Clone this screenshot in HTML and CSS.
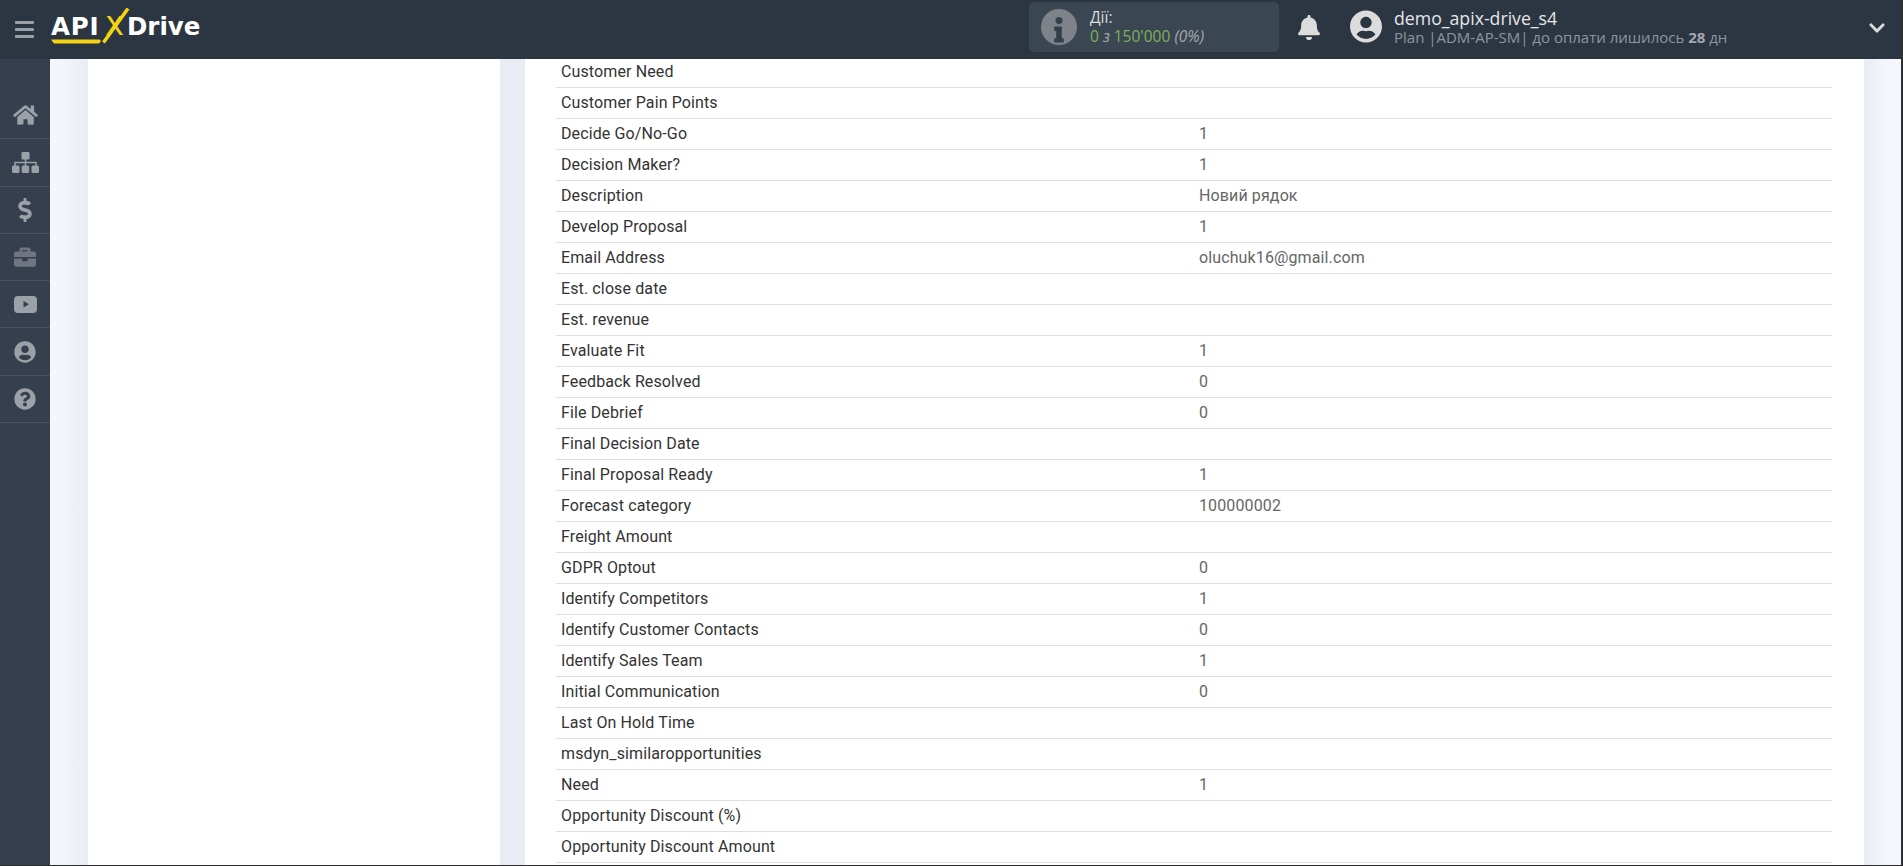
FILE: index.html
```html
<!DOCTYPE html>
<html lang="uk">
<head>
<meta charset="utf-8">
<title>ApiX-Drive</title>
<link rel="stylesheet" href="styles.css">
</head>
<body>
<div class="app">
  <header class="topbar">
    <div class="menu-btn"><i></i><i></i><i></i></div>
    <div class="logo">
      <span class="logo-api">API</span><span class="logo-x">X</span><span class="logo-drive">Drive</span>
      <svg class="logo-art" viewBox="0 0 160 44" width="160" height="44"><path d="M0 31.500h48.500l1.500 1.500-2 2.500H3z" fill="#f5d214"/><path d="M52.500 34.500 77 .5" stroke="#f5d214" stroke-width="3.500" fill="none"/></svg>
    </div>
    <div class="actions">
      <svg class="info-ico" viewBox="0 0 36 36" width="36" height="36"><circle cx="18" cy="18" r="18" fill="#7d8388"/><g transform="translate(13.200 8) scale(.05)"><path fill="#333f49" d="M20 424.229h20V279.771H20c-11.046 0-20-8.954-20-20V212c0-11.046 8.954-20 20-20h112c11.046 0 20 8.954 20 20v212.229h20c11.046 0 20 8.954 20 20V492c0 11.046-8.954 20-20 20H20c-11.046 0-20-8.954-20-20v-47.771c0-11.046 8.954-20 20-20zM96 0C56.235 0 24 32.235 24 72s32.235 72 72 72 72-32.235 72-72S135.764 0 96 0z"/></g></svg>
      <div class="actions-text">
        <div class="actions-title">Дії:</div>
        <div class="actions-count">0 <em class="of">з</em> 150'000 <em class="pct">(0%)</em></div>
      </div>
    </div>
    <svg class="bell" viewBox="0 0 448 512" width="22" height="25"><path fill="#dcdcdc" d="M224 512c35.32 0 63.97-28.65 63.97-64H160.030c0 35.35 28.650 64 63.970 64zm215.390-149.710c-19.320-20.760-55.470-51.990-55.470-154.290 0-77.700-54.480-139.900-127.940-155.160V32c0-17.670-14.320-32-31.980-32s-31.980 14.330-31.980 32v20.840C118.560 68.100 64.080 130.300 64.080 208c0 102.300-36.150 133.530-55.470 154.290-6 6.450-8.660 14.160-8.610 21.710.11 16.400 12.980 32 32.100 32h383.800c19.120 0 32-15.600 32.100-32 .05-7.550-2.610-15.270-8.610-21.710z"/></svg>
    <svg class="avatar" viewBox="0 0 496 512" width="32" height="33"><path fill="#dcdcdc" d="M248 8C111 8 0 119 0 256s111 248 248 248 248-111 248-248S385 8 248 8zm0 96c48.600 0 88 39.400 88 88s-39.400 88-88 88-88-39.400-88-88 39.400-88 88-88zm0 344c-58.700 0-111.300-26.600-146.500-68.200 18.800-35.400 55.600-59.800 98.500-59.800 2.400 0 4.800.4 7.100 1.100 13 4.200 26.600 6.900 40.900 6.900 14.300 0 28-2.700 40.900-6.900 2.300-.7 4.700-1.100 7.100-1.100 42.900 0 79.700 24.400 98.500 59.800C359.300 421.400 306.700 448 248 448z"/></svg>
    <div class="user">
      <div class="user-name">demo_apix-drive_s4</div>
      <div class="user-plan">Plan |ADM-AP-SM| до оплати лишилось <b>28</b> дн</div>
    </div>
    <svg class="chev" viewBox="0 0 448 512" width="16" height="18"><path fill="#dcdcdc" d="M207.029 381.476L12.686 187.132c-9.373-9.373-9.373-24.569 0-33.941l22.667-22.667c9.357-9.357 24.522-9.375 33.901-.04L224 284.505l154.745-154.021c9.379-9.335 24.544-9.317 33.901.04l22.667 22.667c9.373 9.373 9.373 24.569 0 33.941L240.971 381.476c-9.373 9.372-24.569 9.372-33.942 0z"/></svg>
  </header>
  <div class="body">
    <nav class="sidebar">
      <a class="nav-item"><svg viewBox="0 0 576 512" width="25" height="22"><path d="M280.370 148.260L96 300.110V464a16 16 0 0 0 16 16l112.060-.29a16 16 0 0 0 15.920-16V368a16 16 0 0 1 16-16h64a16 16 0 0 1 16 16v95.640a16 16 0 0 0 16 16.050L464 480a16 16 0 0 0 16-16V300L295.670 148.260a12.190 12.190 0 0 0-15.300 0zM571.600 251.470L488 182.560V44.050a12 12 0 0 0-12-12h-56a12 12 0 0 0-12 12v72.610L318.470 43a48 48 0 0 0-61 0L4.340 251.470a12 12 0 0 0-1.600 16.900l25.500 31A12 12 0 0 0 45.150 301l235.220-193.740a12.190 12.190 0 0 1 15.300 0L530.900 301a12 12 0 0 0 16.900-1.600l25.500-31a12 12 0 0 0-1.700-16.930z"/></svg></a>
      <a class="nav-item"><svg viewBox="0 0 27 21" width="27" height="21"><rect x="9.500" width="8" height="7.500" rx="1"/><rect y="13.500" width="7.500" height="7.500" rx="1.500"/><rect x="9.700" y="13.500" width="7.500" height="7.500" rx="1.500"/><rect x="19.500" y="13.500" width="7.500" height="7.500" rx="1.500"/><path d="M3 14v-3.500h21V14M13.500 7v7" fill="none" stroke="#9ca1a8" stroke-width="1.500"/></svg></a>
      <a class="nav-item"><svg viewBox="0 0 288 512" width="14" height="24"><path d="M209.200 233.400l-108-31.600C88.700 198.200 80 186.500 80 173.500c0-16.300 13.200-29.500 29.500-29.500h66.300c12.200 0 24.200 3.700 34.200 10.500 6.100 4.100 14.300 3.100 19.500-2l34.800-34c7.100-6.900 6.100-18.400-1.800-24.500C238 74.800 207.400 64.100 176 64V16c0-8.800-7.200-16-16-16h-32c-8.800 0-16 7.200-16 16v48h-2.500C45.800 64-5.400 118.700.5 183.600c4.200 46.100 39.400 83.600 83.800 96.600l102.500 30c12.500 3.700 21.200 15.300 21.200 28.300 0 16.300-13.200 29.500-29.500 29.500h-66.300C100 368 88 364.300 78 357.500c-6.100-4.100-14.300-3.100-19.500 2l-34.800 34c-7.100 6.900-6.100 18.400 1.800 24.500 24.500 19.200 55.100 29.900 86.500 30v48c0 8.800 7.200 16 16 16h32c8.800 0 16-7.200 16-16v-48.200c46.600-.9 90.300-28.600 105.700-72.700 21.500-61.600-14.600-124.800-72.500-141.700z"/></svg></a>
      <a class="nav-item nav-dim"><svg viewBox="0 0 512 512" width="22" height="22"><path d="M320 336c0 8.840-7.160 16-16 16h-96c-8.840 0-16-7.160-16-16v-48H0v144c0 25.600 22.400 48 48 48h416c25.600 0 48-22.400 48-48V288H320v48zm144-208h-80V80c0-25.600-22.400-48-48-48H176c-25.600 0-48 22.400-48 48v48H48c-25.600 0-48 22.400-48 48v80h512v-80c0-25.600-22.400-48-48-48zm-144 0H192V96h128v32z"/></svg></a>
      <a class="nav-item"><svg viewBox="0 0 23 17" width="23" height="17"><path fill-rule="evenodd" d="M4 0h15a4 4 0 0 1 4 4v9a4 4 0 0 1-4 4H4a4 4 0 0 1-4-4V4a4 4 0 0 1 4-4zM9.500 5v6.500l5.500-3.250z"/></svg></a>
      <a class="nav-item"><svg viewBox="0 0 496 512" width="22" height="22"><path d="M248 8C111 8 0 119 0 256s111 248 248 248 248-111 248-248S385 8 248 8zm0 96c48.600 0 88 39.400 88 88s-39.400 88-88 88-88-39.400-88-88 39.400-88 88-88zm0 344c-58.700 0-111.300-26.600-146.500-68.200 18.800-35.400 55.600-59.800 98.500-59.800 2.400 0 4.800.4 7.100 1.100 13 4.200 26.600 6.900 40.900 6.900 14.300 0 28-2.700 40.900-6.900 2.300-.7 4.700-1.100 7.100-1.100 42.900 0 79.700 24.400 98.500 59.800C359.300 421.400 306.700 448 248 448z"/></svg></a>
      <a class="nav-item"><svg viewBox="0 0 512 512" width="22" height="22"><path d="M504 256c0 136.997-111.043 248-248 248S8 392.997 8 256C8 119.083 119.043 8 256 8s248 111.083 248 248zM262.655 90c-54.497 0-89.255 22.957-116.549 63.758-3.536 5.286-2.353 12.415 2.715 16.258l34.699 26.310c5.205 3.947 12.621 3.008 16.665-2.122 17.864-22.658 30.113-35.797 57.303-35.797 20.429 0 45.698 13.148 45.698 32.958 0 14.976-12.363 22.667-32.534 33.976C247.128 238.528 216 254.941 216 296v4c0 6.627 5.373 12 12 12h56c6.627 0 12-5.373 12-12v-1.333c0-28.462 83.186-29.647 83.186-106.667 0-58.002-60.165-102-116.531-102zM256 338c-25.365 0-46 20.635-46 46 0 25.364 20.635 46 46 46s46-20.636 46-46c0-25.365-20.635-46-46-46z"/></svg></a>
    </nav>
    <main class="main">
      <aside class="card card-left"></aside>
      <section class="card card-right">
        <div class="rows">
          <div class="row"><span class="k">Customer Need</span><span class="v"></span></div>
          <div class="row"><span class="k">Customer Pain Points</span><span class="v"></span></div>
          <div class="row"><span class="k">Decide Go/No-Go</span><span class="v">1</span></div>
          <div class="row"><span class="k">Decision Maker?</span><span class="v">1</span></div>
          <div class="row"><span class="k">Description</span><span class="v">Новий рядок</span></div>
          <div class="row"><span class="k">Develop Proposal</span><span class="v">1</span></div>
          <div class="row"><span class="k">Email Address</span><span class="v">oluchuk16@gmail.com</span></div>
          <div class="row"><span class="k">Est. close date</span><span class="v"></span></div>
          <div class="row"><span class="k">Est. revenue</span><span class="v"></span></div>
          <div class="row"><span class="k">Evaluate Fit</span><span class="v">1</span></div>
          <div class="row"><span class="k">Feedback Resolved</span><span class="v">0</span></div>
          <div class="row"><span class="k">File Debrief</span><span class="v">0</span></div>
          <div class="row"><span class="k">Final Decision Date</span><span class="v"></span></div>
          <div class="row"><span class="k">Final Proposal Ready</span><span class="v">1</span></div>
          <div class="row"><span class="k">Forecast category</span><span class="v">100000002</span></div>
          <div class="row"><span class="k">Freight Amount</span><span class="v"></span></div>
          <div class="row"><span class="k">GDPR Optout</span><span class="v">0</span></div>
          <div class="row"><span class="k">Identify Competitors</span><span class="v">1</span></div>
          <div class="row"><span class="k">Identify Customer Contacts</span><span class="v">0</span></div>
          <div class="row"><span class="k">Identify Sales Team</span><span class="v">1</span></div>
          <div class="row"><span class="k">Initial Communication</span><span class="v">0</span></div>
          <div class="row"><span class="k">Last On Hold Time</span><span class="v"></span></div>
          <div class="row"><span class="k">msdyn_similaropportunities</span><span class="v"></span></div>
          <div class="row"><span class="k">Need</span><span class="v">1</span></div>
          <div class="row"><span class="k">Opportunity Discount (%)</span><span class="v"></span></div>
          <div class="row"><span class="k">Opportunity Discount Amount</span><span class="v"></span></div>
        </div>
      </section>
    </main>
  </div>
</div>
</body>
</html>
```
FILE: styles.css
```css
* { box-sizing: border-box; }
html, body { margin: 0; height: 100%; overflow: hidden; background: #2e2e2e; }
body { padding: 0 2px 1px 0; font-family: Roboto, "Liberation Sans", sans-serif; }
.app { height: 100%; display: flex; flex-direction: column; overflow: hidden; }

.topbar { flex: 0 0 59px; height: 59px; background: #2c3643; display: flex; align-items: center; position: relative; z-index: 2; }
.menu-btn { width: 19px; margin-left: 15px; display: flex; flex-direction: column; gap: 4px; margin-top: -1px; }
.menu-btn i { display: block; height: 3px; border-radius: 1px; background: #9ba0a6; }

.logo { position: relative; display: flex; align-items: baseline; margin-left: 17px; width: 150px; height: 44px; padding-top: 3px; font-family: "DejaVu Sans", sans-serif; color: #fff; font-size: 24.500px; font-weight: 700; line-height: 30px; }
.logo-api { flex: 0 0 51px; letter-spacing: .8px; }
.logo-x { flex: 0 0 25px; color: #f5d214; font-family: Inter, sans-serif; font-weight: 500; font-size: 26px; text-align: center; }
.logo-drive { letter-spacing: 0; }
.logo-art { position: absolute; left: 0; top: 0; }

.actions { width: 250px; height: 50px; margin-left: 828px; margin-top: -5px; background: #3a4651; border-radius: 5px; display: flex; align-items: center; padding-left: 12px; }
.actions-text { margin-left: 13px; font-size: 15.500px; line-height: 19px; font-family: "Open Sans", sans-serif; }
.actions-title { color: #dcdcdc; }
.actions-count { color: #7eb05c; }
.of, .pct { color: #a5a9ad; font-style: italic; }

.bell { margin-left: 19px; margin-top: -5px; flex: none; }
.avatar { margin-left: 30px; margin-top: -7px; flex: none; }
.user { margin-left: 12px; margin-top: -5px; font-family: "Open Sans", sans-serif; }
.user-name { color: #e6e6e6; font-size: 17.700px; line-height: 20px; }
.user-plan { color: #8f959b; font-size: 15px; line-height: 18px; }
.user-plan b { color: #a5a9ad; }
.chev { position: absolute; left: 1869px; top: 19px; }

.body { flex: 1; display: flex; min-height: 0; }
.sidebar { flex: 0 0 50px; background: #353f4e; padding-top: 33px; }
.nav-item { height: 47.300px; display: flex; align-items: center; justify-content: center; border-bottom: 1px solid #48515f; }
.nav-item svg { fill: #9ca1a8; }
.nav-dim svg { fill: #6f7680; }

.main { flex: 1; min-width: 0; display: flex; padding: 0 37px 0 38px; gap: 25px; overflow: hidden; background: linear-gradient(90deg, #f3f6fc 0, #f3f6fc 10px, #e9ecf2 38px, #e9ecf2 calc(100% - 37px), #f3f6fc calc(100% - 16px), #f3f6fc 100%); }
.card { background: #fff; }
.card-left { flex: 0 0 412px; }
.card-right { flex: 1; min-width: 0; padding: 0 32px 0 31px; overflow: hidden; }

.rows { margin-top: -2px; }
.row { height: 31px; display: flex; align-items: center; border-bottom: 1px solid #dfdfdf; padding: 0 0 1px 5px; font-size: 16px; letter-spacing: .12px; }
.k { flex: 0 0 638px; color: #333; }
.v { color: #666; }
```
